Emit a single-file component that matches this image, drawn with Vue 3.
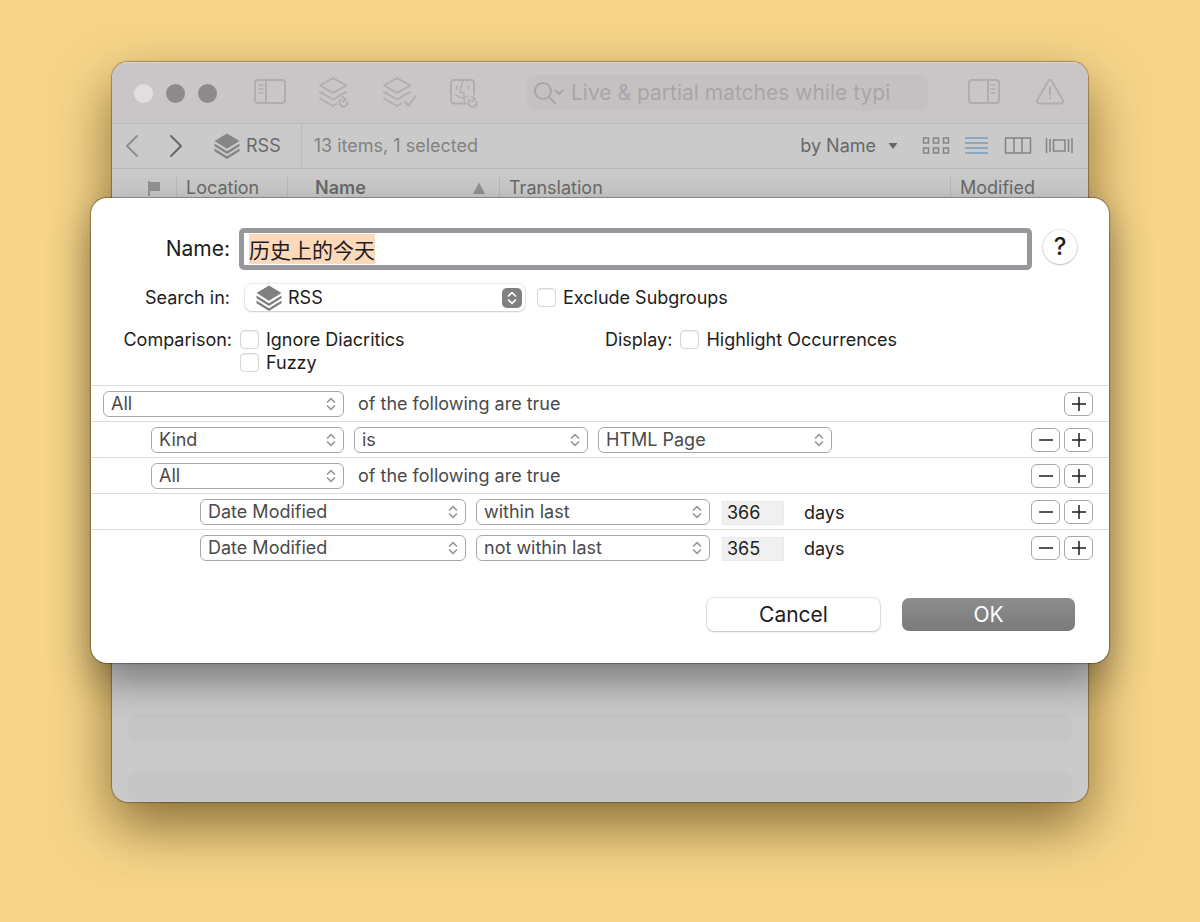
<template>
  <main class="desktop">
    <svg class="symbols" aria-hidden="true">
      <symbol id="icon-layers" viewBox="0 0 26 26">
        <path d="M13 0.5 L25.5 8 L13 15.8 L0.5 8 Z" />
        <path d="M0.5 10.5 L13 18.300 L25.5 10.5 V13.2 L13 21 L0.5 13.2 Z" />
        <path d="M0.5 15.5 L13 23.300 L25.5 15.5 V18.2 L13 26 L0.5 18.2 Z" />
      </symbol>
      <symbol id="icon-updown" viewBox="0 0 10 14">
        <path d="M1.5 5 L5 1.6 L8.5 5 M1.5 9 L5 12.4 L8.5 9" fill="none" stroke="currentColor" stroke-width="1.7" stroke-linecap="round" stroke-linejoin="round" />
      </symbol>
    </svg>

    <section class="window">
      <header class="toolbar">
        <div class="lights">
          <button type="button" class="light off" aria-label="Close"></button>
          <button type="button" class="light" aria-label="Minimize"></button>
          <button type="button" class="light" aria-label="Zoom"></button>
        </div>

        <div class="tools">
          <button type="button" class="tool" aria-label="Sidebar">
            <svg width="34" height="32" viewBox="0 0 34 32">
              <rect x="2" y="3" width="30" height="23" rx="3" />
              <path d="M13 3 V26" />
              <path class="thin" d="M6 8 H10 M6 12 H10 M6 16 H10" />
            </svg>
          </button>
          <button type="button" class="tool" aria-label="Update groups">
            <svg width="34" height="32" viewBox="0 0 34 32">
              <path d="M15 1 L28 8.5 L15 16 L2 8.5 Z" />
              <path d="M2 15 L15 22.500 L28 15 M2 21.500 L15 29 L18.5 27" />
              <path d="M22.500 22.800 A4 4 0 1 0 29.500 25 M24.500 19.800 L27.500 22 L25 24.500" />
            </svg>
          </button>
          <button type="button" class="tool" aria-label="Verify groups">
            <svg width="34" height="32" viewBox="0 0 34 32">
              <path d="M14 1 L27 8.5 L14 16 L1 8.5 Z" />
              <path d="M1 15 L14 22.500 L27 15 M1 21.500 L14 29 L18.5 26.500" />
              <path d="M22 24.500 L25.5 28.500 L32.5 19.500" />
            </svg>
          </button>
          <button type="button" class="tool" aria-label="Finder">
            <svg width="34" height="32" viewBox="0 0 34 32">
              <path d="M18 26.500 H6 A3 3 0 0 1 3 23.500 V6 A3 3 0 0 1 6 3 H23 A3 3 0 0 1 26 6 V17.500" />
              <path class="thin" d="M15 3.500 C13 8.500 12.300 12.500 12.300 15.500 H15.800 C15.600 19.500 16 22.500 16.800 26 M8.500 9 V12 M20.500 9 V12 M7.500 17.500 C11 21.500 16.500 21.500 20 19" />
              <path d="M22 22.800 A4 4 0 1 0 28.500 25 M24 19.800 L27 22 L24.500 24.500" />
            </svg>
          </button>
        </div>

        <label class="search">
          <svg width="32" height="26" viewBox="0 0 32 26">
            <circle cx="10" cy="11" r="8" />
            <path d="M16 17 L22 23" />
            <path d="M22.500 10.500 L26 14 L29.500 10.500" />
          </svg>
          <input type="search" aria-label="Search" placeholder="Live &amp; partial matches while typi">
        </label>

        <div class="tools end">
          <button type="button" class="tool" aria-label="Inspector">
            <svg width="34" height="32" viewBox="0 0 34 32">
              <rect x="2" y="3" width="30" height="23" rx="3" />
              <path d="M21 3 V26" />
              <path class="thin" d="M24 8 H28 M24 12 H28 M24 16 H28" />
            </svg>
          </button>
          <button type="button" class="tool" aria-label="Log">
            <svg width="34" height="32" viewBox="0 0 34 32">
              <path d="M15.200 4.200 Q17 1.500 18.800 4.200 L29.700 23 Q31 26 28 26.500 H6 Q3 26 4.300 23 Z" />
              <path d="M17 10 V17.500 M17 21 V21.500" />
            </svg>
          </button>
        </div>
      </header>

      <nav class="pathbar">
        <button type="button" class="arrow faded" aria-label="Back">
          <svg width="16" height="24" viewBox="0 0 16 24"><path d="M13 2 L3 12 L13 22" /></svg>
        </button>
        <button type="button" class="arrow" aria-label="Forward">
          <svg width="16" height="24" viewBox="0 0 16 24"><path d="M3 2 L13 12 L3 22" /></svg>
        </button>
        <a href="#" class="crumb">
          <svg class="layers" width="26" height="26"><use href="#icon-layers" /></svg>
          RSS
        </a>
        <span class="count">13 items, 1 selected</span>
        <button type="button" class="sort">
          by Name
          <svg width="10" height="6" viewBox="0 0 10 6"><path d="M0.500 0 H9.500 L5 6 Z" /></svg>
        </button>
        <div class="views">
          <button type="button" aria-label="Icons">
            <svg width="28" height="20" viewBox="0 0 28 20">
              <path d="M1.500 2 H6.500 V7 H1.500 Z M11.500 2 H16.500 V7 H11.500 Z M21.500 2 H26.500 V7 H21.500 Z M1.500 12 H6.500 V17 H1.500 Z M11.500 12 H16.500 V17 H11.500 Z M21.500 12 H26.500 V17 H21.500 Z" />
            </svg>
          </button>
          <button type="button" class="current" aria-label="List">
            <svg width="28" height="20" viewBox="0 0 28 20"><path d="M2 2 H25 M2 7 H25 M2 12 H25 M2 17 H25" /></svg>
          </button>
          <button type="button" aria-label="Columns">
            <svg width="28" height="20" viewBox="0 0 28 20"><path d="M1.500 2 H26.500 V17 H1.500 Z M10 2 V17 M18 2 V17" /></svg>
          </button>
          <button type="button" aria-label="Cover flow">
            <svg width="28" height="20" viewBox="0 0 28 20"><path d="M8.500 4 H20 V15 H8.500 Z M1.500 2 V17 M5 3 V16 M23.500 3 V16 M27 2 V17" /></svg>
          </button>
        </div>
      </nav>

      <table class="list">
        <thead>
          <tr>
            <th class="col-flag">
              <svg width="16" height="16" viewBox="0 0 16 16" aria-label="Flag"><path d="M2 1 H4 V2 H14 V11 H4 V16 H2 Z" /></svg>
            </th>
            <th class="col-location">Location</th>
            <th class="col-name">
              <span class="sorted">Name<svg width="12" height="12" viewBox="0 0 12 12"><path d="M6 0.500 L12 12 H0 Z" /></svg></span>
            </th>
            <th>Translation</th>
            <th class="col-modified">Modified</th>
          </tr>
        </thead>
        <tbody>
          <tr v-for="n in 20" :key="n">
            <td colspan="5"><div class="band"></div></td>
          </tr>
        </tbody>
      </table>

      <form class="dialog" role="dialog" aria-label="Smart rule" @submit.prevent>
        <div class="line name-line">
          <label class="caption" for="name">Name:</label>
          <input id="name" ref="nameInput" v-model="name" class="name" type="text">
          <button type="button" class="help" aria-label="Help">?</button>
        </div>

        <div class="line search-line">
          <label class="caption" for="scope">Search in:</label>
          <span class="scope">
            <svg class="layers" width="26" height="26"><use href="#icon-layers" /></svg>
            <select id="scope">
              <option>RSS</option>
            </select>
            <span class="knob"><svg width="10" height="14"><use href="#icon-updown" /></svg></span>
          </span>
          <label class="check"><input v-model="excludeSubgroups" type="checkbox">Exclude Subgroups</label>
        </div>

        <div class="line options-line">
          <span class="caption">Comparison:</span>
          <div class="checks comparison">
            <label class="check"><input v-model="ignoreDiacritics" type="checkbox">Ignore Diacritics</label>
            <label class="check"><input v-model="fuzzy" type="checkbox">Fuzzy</label>
          </div>
          <span>Display:</span>
          <div class="checks">
            <label class="check"><input v-model="highlight" type="checkbox">Highlight Occurrences</label>
          </div>
        </div>

        <div class="rules">
          <div v-for="(rule, i) in rules" :key="i" class="rule" :class="'level-' + rule.level">
            <span v-for="(popup, j) in rule.popups" :key="j" class="popup" :class="popup.size">
              <select :aria-label="popup.label">
                <option>{{ popup.value }}</option>
              </select>
              <svg width="10" height="14"><use href="#icon-updown" /></svg>
            </span>
            <span v-if="rule.text" class="rule-text">{{ rule.text }}</span>
            <label v-if="rule.days" class="days">
              <input v-model="rule.days" type="text">
              days
            </label>
            <div class="rule-buttons">
              <button v-if="i > 0" type="button" aria-label="Remove rule">
                <svg width="16" height="16" viewBox="0 0 16 16"><path d="M1 8 H15" /></svg>
              </button>
              <button type="button" aria-label="Add rule">
                <svg width="16" height="16" viewBox="0 0 16 16"><path d="M1 8 H15 M8 1 V15" /></svg>
              </button>
            </div>
          </div>
        </div>

        <footer class="actions">
          <button type="button" class="cancel">Cancel</button>
          <button type="submit" class="ok">OK</button>
        </footer>
      </form>
    </section>
  </main>
</template>

<script setup>
import { ref, onMounted } from 'vue'

const name = ref('历史上的今天')
const nameInput = ref(null)

const excludeSubgroups = ref(false)
const ignoreDiacritics = ref(false)
const fuzzy = ref(false)
const highlight = ref(false)

const rules = ref([
  {
    level: 0,
    popups: [{ label: 'Match', value: 'All', size: 'w-large' }],
    text: 'of the following are true'
  },
  {
    level: 1,
    popups: [
      { label: 'Attribute', value: 'Kind', size: 'w-small' },
      { label: 'Operator', value: 'is', size: 'w-medium' },
      { label: 'Value', value: 'HTML Page', size: 'w-medium' }
    ]
  },
  {
    level: 1,
    popups: [{ label: 'Match', value: 'All', size: 'w-small' }],
    text: 'of the following are true'
  },
  {
    level: 2,
    popups: [
      { label: 'Attribute', value: 'Date Modified', size: 'w-wide' },
      { label: 'Operator', value: 'within last', size: 'w-medium' }
    ],
    days: '366'
  },
  {
    level: 2,
    popups: [
      { label: 'Attribute', value: 'Date Modified', size: 'w-wide' },
      { label: 'Operator', value: 'not within last', size: 'w-medium' }
    ],
    days: '365'
  }
])

onMounted(() => {
  // The name is ready to be replaced as soon as the dialog opens
  nameInput.value.focus()
  nameInput.value.select()
})
</script>

<style>
body {
  background: #f6d589;
}
</style>

<style scoped>
.desktop {
  box-sizing: border-box;
  min-height: 100vh;
  padding: 62px 112px 120px;
  background: #f6d589;
  font-family: Inter, "Noto Sans CJK SC", sans-serif;
  font-size: 18px;
  line-height: 24px;
  color: #1d1d1d;
  overflow: hidden;
}

.symbols {
  position: absolute;
  width: 0;
  height: 0;
}

svg {
  display: block;
  flex: none;
}

button,
input,
select {
  box-sizing: border-box;
  margin: 0;
  font: inherit;
  color: inherit;
}

button {
  padding: 0;
  border: none;
  background: none;
}

.layers {
  fill: #808080;
}

/* Window */
.window {
  position: relative;
  border-radius: 16px;
  background: #cacaca;
  box-shadow: 0 0 1px 1px rgba(0, 0, 0, 0.3), 0 24px 56px rgba(60, 40, 0, 0.6);
}

.toolbar {
  display: flex;
  align-items: center;
  height: 62px;
  box-sizing: border-box;
  padding: 0 21px 0 22px;
  border-radius: 16px 16px 0 0;
  border-top: 1px solid #dad8d8;
  border-bottom: 1px solid #bcb9b9;
  background: #cac6c7;
}

.lights {
  display: flex;
  gap: 13px;
}

.light {
  width: 19px;
  height: 19px;
  border-radius: 50%;
  background: #8e8a8a;
}

.light.off {
  background: #e2dedd;
}

.tools {
  display: flex;
  gap: 31px;
  margin-left: 36px;
}

.tools.end {
  gap: 32px;
  margin-left: 39px;
}

.tool svg {
  fill: none;
  stroke: #b0adae;
  stroke-width: 2;
  stroke-linecap: round;
  stroke-linejoin: round;
}

.tool .thin {
  stroke-width: 1.5;
}

.search {
  display: flex;
  align-items: center;
  flex: 1;
  gap: 6px;
  height: 36px;
  margin-left: 45px;
  padding-left: 6px;
  border-radius: 8px;
  background: #c5c1c2;
}

.search svg {
  fill: none;
  stroke: #a9a5a6;
  stroke-width: 2;
  stroke-linecap: round;
}

.search input {
  flex: 1;
  min-width: 0;
  padding: 0;
  border: none;
  outline: none;
  background: none;
  font-size: 21px;
}

.search input::placeholder {
  color: #a9a5a6;
  opacity: 1;
}

.pathbar {
  display: flex;
  align-items: center;
  height: 45px;
  box-sizing: border-box;
  padding: 0 15px 0 12px;
  border-bottom: 1px solid #b8b8b8;
  color: #6d6d6d;
}

.arrow {
  margin-right: 28px;
}

.arrow svg {
  fill: none;
  stroke: #686868;
  stroke-width: 2;
  stroke-linecap: round;
  stroke-linejoin: round;
}

.arrow.faded svg {
  stroke: #8f8f8f;
}

.crumb {
  display: flex;
  align-items: center;
  align-self: stretch;
  gap: 6px;
  margin-left: 2px;
  padding-right: 20px;
  border-right: 1px solid #bababa;
  color: #6a6a6a;
  text-decoration: none;
}

.crumb .layers {
  fill: #858587;
}

.count {
  flex: 1;
  padding-left: 12px;
  color: #828282;
}

.sort {
  display: flex;
  align-items: center;
  gap: 12px;
  color: #686868;
}

.sort svg {
  fill: #686868;
}

.views {
  display: flex;
  gap: 13px;
  margin-left: 24px;
}

.views svg {
  fill: none;
  stroke: #858585;
  stroke-width: 1.5;
}

.views .current svg {
  stroke: #74a0bd;
}

.list {
  width: 100%;
  table-layout: fixed;
  border-collapse: separate;
  border-spacing: 0;
  padding-bottom: 1px;
}

.list th {
  height: 52px;
  box-sizing: border-box;
  padding: 0 0 14px 10px;
  background: linear-gradient(#bababa, #bababa) no-repeat left 7px / 1px 31px;
  color: #6a6a6a;
  font-weight: 400;
  text-align: left;
}

.list th.col-flag {
  width: 64px;
  padding-left: 34px;
  background: none;
}

.list th.col-location {
  width: 111px;
}

.list th.col-name {
  width: 212px;
  padding-left: 28px;
  font-weight: 600;
}

.list th.col-modified {
  width: 138px;
}

.list th svg {
  fill: #929292;
}

.sorted {
  display: flex;
  align-items: center;
  justify-content: space-between;
  padding-right: 14px;
}

.list td {
  padding: 0 16px;
}

.band {
  height: 29px;
  border-radius: 8px;
}

tr:nth-child(even) .band {
  background: #c6c6c6;
}

/* Dialog */
.dialog {
  position: absolute;
  top: 136px;
  left: -21px;
  right: -21px;
  border-radius: 16px;
  background: #ffffff;
  box-shadow: 0 0 1px 1px rgba(0, 0, 0, 0.3), 0 18px 40px rgba(0, 0, 0, 0.38);
}

.line {
  display: flex;
}

.caption {
  flex: none;
  width: 139px;
  text-align: right;
}

.name-line {
  align-items: center;
  padding: 30px 32px 0 0;
}

.name-line .caption {
  font-size: 21px;
}

.name {
  flex: 1;
  min-width: 0;
  height: 42px;
  margin: 0 11px 0 9px;
  padding: 0 5px;
  border: 5px solid #98979c;
  border-radius: 5px;
  outline: none;
  background: #ffffff;
  font-size: 21px;
  line-height: 26px;
}

.name::selection {
  background: #fbd9bb;
  color: #1d1d1d;
}

.help {
  width: 34px;
  height: 34px;
  margin-bottom: 4px;
  border-radius: 50%;
  background: #ffffff;
  box-shadow: 0 0 1px 1px rgba(0, 0, 0, 0.1), 0 1px 2px rgba(0, 0, 0, 0.16);
  font-size: 24px;
  font-weight: 500;
}

.search-line {
  align-items: center;
  padding-top: 14px;
}

.scope {
  display: grid;
  align-items: center;
  width: 280px;
  margin: 0 12px 0 15px;
  border-radius: 7px;
  box-shadow: 0 0 1px 1px rgba(0, 0, 0, 0.08), 0 1px 2px rgba(0, 0, 0, 0.14);
}

.scope > * {
  grid-area: 1 / 1;
}

.scope select {
  width: 100%;
  height: 27px;
  padding: 0 32px 0 43px;
  border: none;
  outline: none;
  background: none;
  appearance: none;
}

.scope .layers {
  margin-left: 11px;
}

.knob {
  display: flex;
  align-items: center;
  justify-content: center;
  justify-self: end;
  width: 20px;
  height: 20px;
  margin-right: 3px;
  border-radius: 5px;
  background: #808080;
  color: #ffffff;
  pointer-events: none;
}

.check {
  display: flex;
  align-items: center;
  gap: 7px;
}

.check input {
  flex: none;
  width: 19px;
  height: 19px;
  border: 1px solid #d6d6d6;
  border-radius: 4px;
  background: #ffffff;
  box-shadow: inset 0 1px 1px rgba(0, 0, 0, 0.08);
  appearance: none;
}

.options-line {
  padding: 17px 0 11px;
  line-height: 23px;
}

.options-line .caption {
  width: 141px;
}

.checks {
  margin-left: 8px;
}

.comparison {
  width: 365px;
}

.rule {
  display: flex;
  align-items: center;
  height: 36px;
  box-sizing: border-box;
  padding: 0 16px 0 12px;
  border-top: 1px solid #dcdcdc;
  color: #4a4a4a;
}

.rule.level-1 {
  padding-left: 60px;
}

.rule.level-2 {
  padding-left: 109px;
}

.popup {
  display: grid;
  align-items: center;
  margin-right: 10px;
  color: #9a9a9a;
}

.popup > * {
  grid-area: 1 / 1;
}

.popup select {
  width: 100%;
  height: 26px;
  padding: 0 24px 0 7px;
  border: 1px solid #a8a8a8;
  border-radius: 6px;
  outline: none;
  background: #ffffff;
  color: #4a4a4a;
  appearance: none;
}

.popup svg {
  justify-self: end;
  margin-right: 8px;
  pointer-events: none;
}

.w-small {
  width: 193px;
}

.w-medium {
  width: 234px;
}

.w-large {
  width: 241px;
}

.w-wide {
  width: 266px;
}

.rule-text {
  margin-left: 4px;
}

.days {
  display: flex;
  align-items: center;
  align-self: flex-end;
  gap: 20px;
  margin-left: 2px;
  padding-bottom: 4px;
  color: #1d1d1d;
}

.days input {
  width: 62px;
  height: 24px;
  padding: 0 4px;
  border: 1px solid #eaeaea;
  outline: none;
  background: #f0f0f0;
}

.rule-buttons {
  display: flex;
  gap: 4px;
  margin-left: auto;
}

.rule-buttons button {
  display: flex;
  align-items: center;
  justify-content: center;
  width: 29px;
  height: 24px;
  border: 1px solid #a8a8a8;
  border-radius: 6px;
  background: #ffffff;
}

.rule-buttons path {
  stroke: #1d1d1d;
  stroke-width: 1.5;
}

.actions {
  display: flex;
  justify-content: flex-end;
  gap: 22px;
  padding: 33px 34px 32px 0;
  font-size: 21px;
}

.actions button {
  width: 173px;
  height: 33px;
  border-radius: 7px;
}

.cancel {
  background: #ffffff;
  box-shadow: 0 0 1px 1px rgba(0, 0, 0, 0.1), 0 1px 2px rgba(0, 0, 0, 0.16);
}

.ok {
  background: linear-gradient(#8d8d8d, #7a7a7a);
  color: #ffffff;
}
</style>
